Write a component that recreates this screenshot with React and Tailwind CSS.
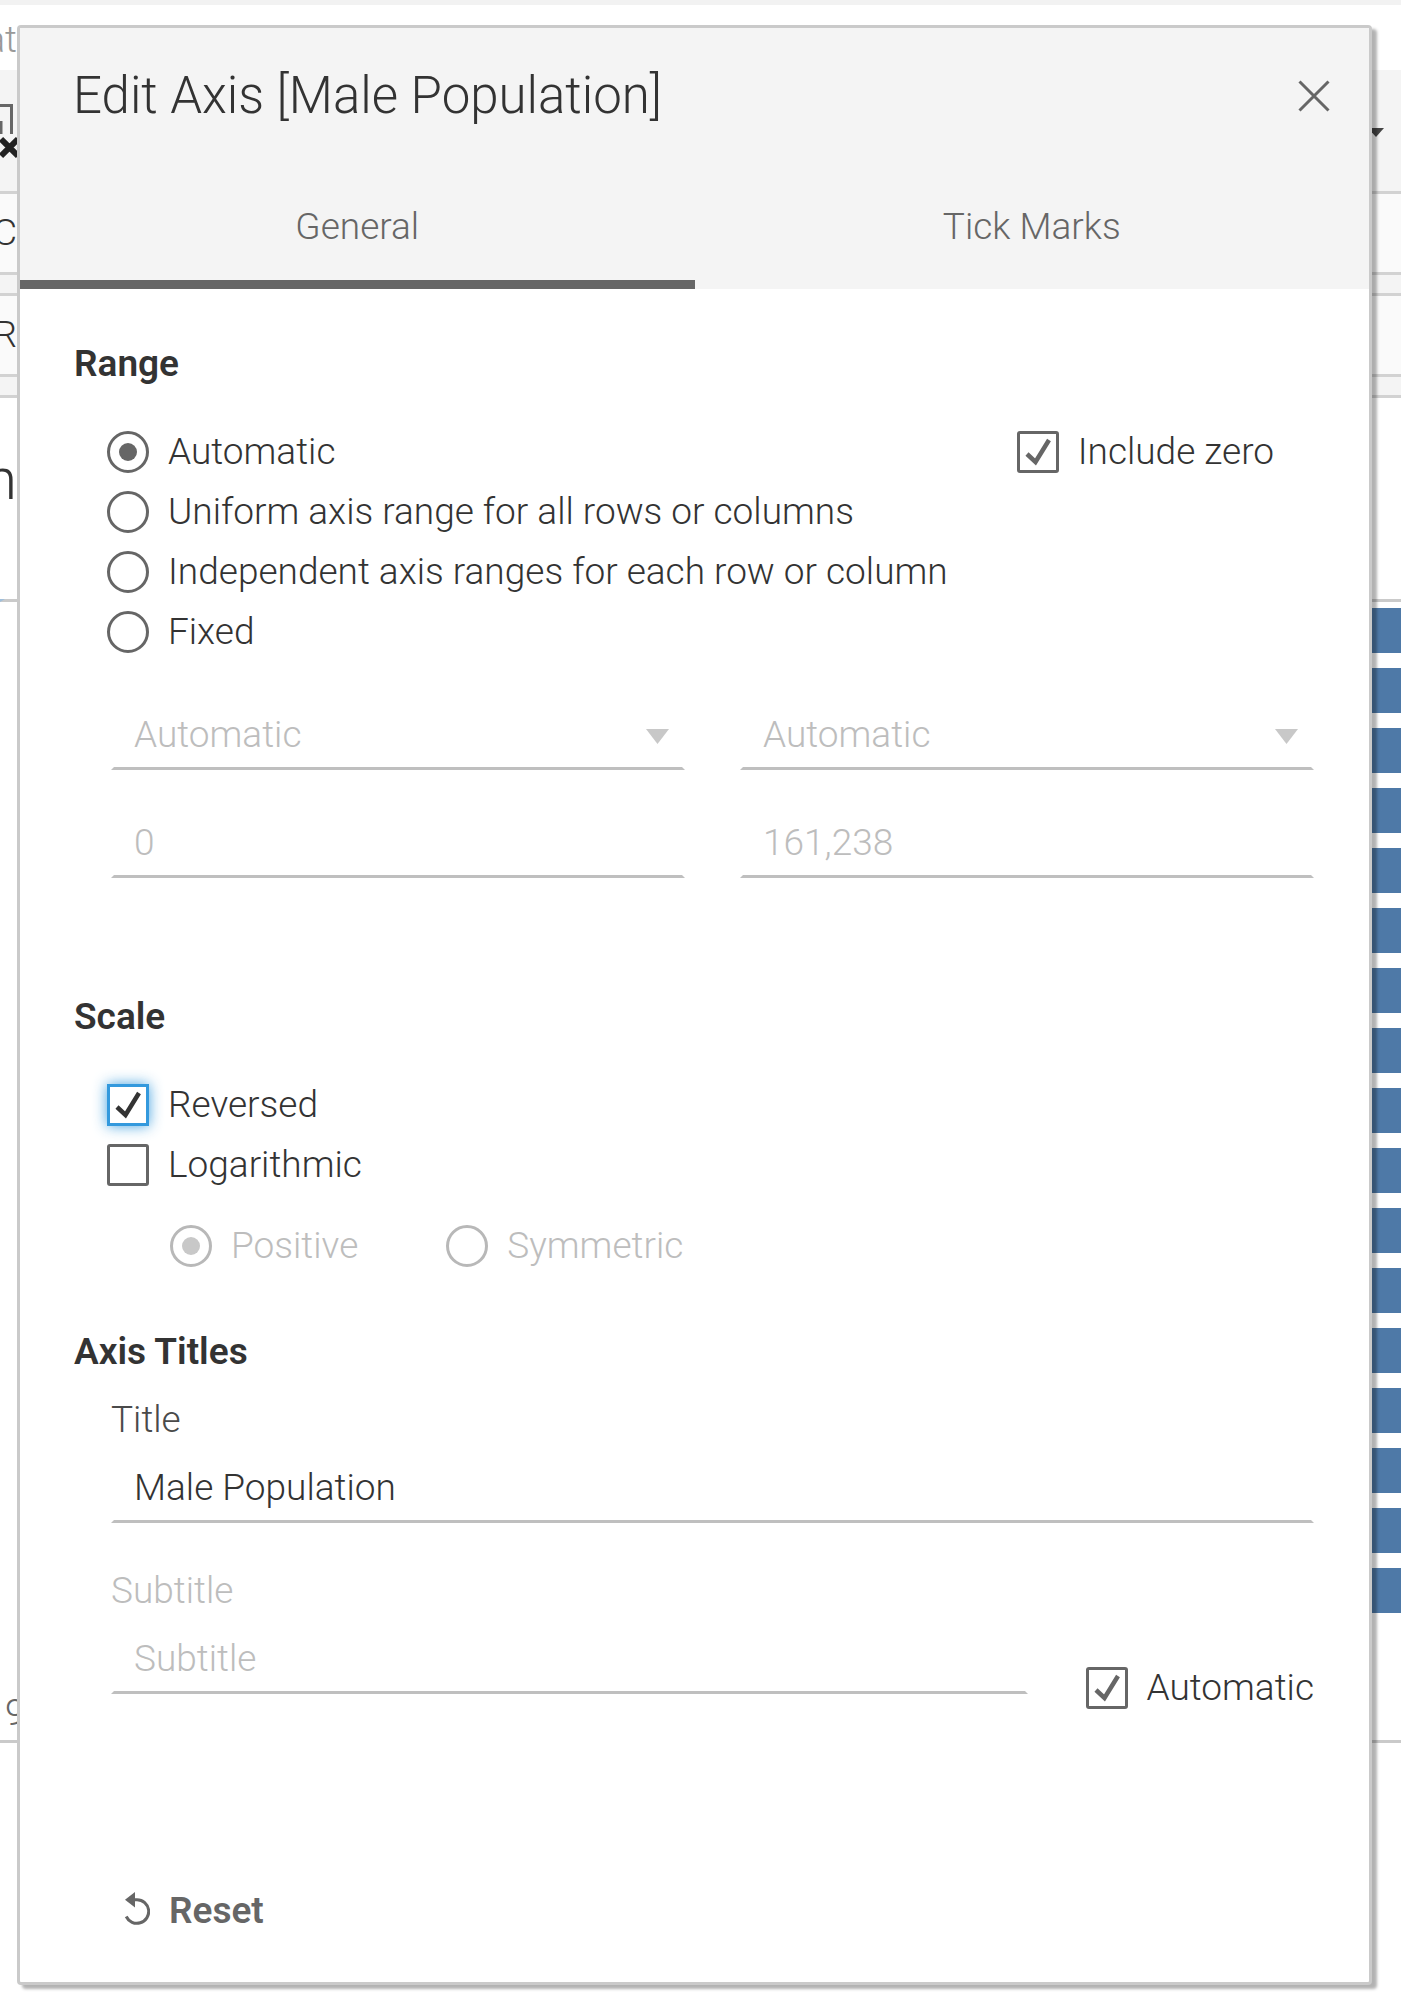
import React, { useState } from 'react';

const BARS = Array.from({ length: 17 }, (_, i) => i);

function Option({ type, label, focused = false, disabled = false, ...props }) {
  const radio = type === 'radio';
  const text = disabled ? 'text-[#bdbdbd]' : 'text-[#333]';
  const shape = radio ? 'rounded-full' : focused ? '' : 'rounded-[3px]';
  const edge = focused
    ? 'border-[#3399dd] shadow-[0_0_14px_rgba(51,153,221,0.9)]'
    : disabled
      ? 'border-[#b8b8b8]'
      : 'border-[#666]';
  return (
    <label className={`flex h-[60px] items-center gap-[19px] whitespace-nowrap ${text}`}>
      <span className="grid size-[42px] shrink-0 place-items-center">
        <input
          type={type}
          disabled={disabled}
          className={`peer col-start-1 row-start-1 size-[42px] appearance-none border-[3px] bg-white outline-none ${shape} ${edge}`}
          {...props}
        />
        {radio ? (
          <span
            className={`pointer-events-none col-start-1 row-start-1 hidden size-[18px] rounded-full peer-checked:block ${disabled ? 'bg-[#c8c8c8]' : 'bg-[#666]'}`}
          />
        ) : (
          <svg
            viewBox="0 0 42 42"
            className={`pointer-events-none col-start-1 row-start-1 hidden size-[42px] peer-checked:block ${focused ? 'text-[#333]' : 'text-[#666]'}`}
            fill="none"
            stroke="currentColor"
            strokeWidth="4.500"
            aria-hidden="true"
          >
            <path d="M10 23 L18.500 31 L32 9" />
          </svg>
        )}
      </span>
      <span>{label}</span>
    </label>
  );
}

const field =
  'h-16 w-full appearance-none border-x-[3px] border-b-[3px] border-x-transparent border-b-[#bfbfbf] bg-transparent pl-5 pb-1 outline-none';

function SelectField({ label }) {
  return (
    <div className="grid items-center">
      <select aria-label={label} disabled className={`${field} col-start-1 row-start-1 text-[#bdbdbd] opacity-100`}>
        <option>Automatic</option>
      </select>
      <svg
        viewBox="0 0 23 15"
        className="pointer-events-none col-start-1 row-start-1 mr-4 mb-1 h-[15px] w-[23px] justify-self-end"
        aria-hidden="true"
      >
        <path d="M0 0H23L11.500 15Z" fill="#c8c8c8" />
      </svg>
    </div>
  );
}

function Stub({ children, className = 'justify-end' }) {
  return <span className={`flex w-[17px] shrink-0 items-center overflow-hidden ${className}`}>{children}</span>;
}

function Workbook() {
  return (
    <div className="col-start-1 row-start-1 min-w-0 overflow-hidden bg-white text-[#333]">
      <div className="h-[5px] bg-[#f2f2f2]" />
      <div className="flex h-[65px] items-center pt-1 text-[#999]">
        <Stub>at</Stub>
      </div>
      <div className="flex h-[124px] justify-between border-b-[3px] border-[#d2d2d2] bg-[#f4f4f4]">
        <svg viewBox="0 0 17 121" className="h-[121px] w-[17px]" fill="none" aria-hidden="true">
          <path d="M0 35.500H11.500V64M1 51V64" stroke="#666" strokeWidth="3" />
          <path d="M1 69L18 86M18 69L1 86" stroke="#222" strokeWidth="6" />
        </svg>
        <svg viewBox="0 0 29 121" className="h-[121px] w-[29px]" aria-hidden="true">
          <path d="M-4 58H12L4 67Z" fill="#444" />
        </svg>
      </div>
      <div className="flex h-[81px] border-b-[3px] border-[#d2d2d2] bg-[#fafafa]">
        <Stub>C</Stub>
      </div>
      <div className="h-[21px] border-b-[3px] border-[#d2d2d2] bg-[#f4f4f4]" />
      <div className="flex h-[81px] border-b-[3px] border-[#d2d2d2] bg-[#fafafa]">
        <Stub>R</Stub>
      </div>
      <div className="h-[21px] border-b-[3px] border-[#d2d2d2] bg-[#f4f4f4]" />
      <div className="flex h-[201px]">
        <Stub className="justify-end pb-10 text-[58px]">n</Stub>
      </div>
      <div className="flex h-[3px] bg-[#cacaca]">
        <svg viewBox="0 0 5 3" className="h-[3px] w-[5px]" aria-hidden="true">
          <path d="M0 0H5L0 3Z" fill="#a0bfda" />
        </svg>
      </div>
      <div className="flex h-[1141px] flex-col border-b-[3px] border-[#cacaca] pt-[6px]">
        <div className="flex flex-col gap-[15px]">
          {BARS.map((i) => (
            <div key={i} className="h-[45px] bg-linear-to-l from-[#4e79a7] from-50% to-transparent to-50%" />
          ))}
        </div>
        <div className="mt-auto flex h-[54px] text-[#666]">
          <Stub className="justify-start pl-[5px]">9</Stub>
        </div>
      </div>
    </div>
  );
}

export default function App() {
  const [range, setRange] = useState('Automatic');
  const [title, setTitle] = useState('Male Population');
  const ranges = [
    'Automatic',
    'Uniform axis range for all rows or columns',
    'Independent axis ranges for each row or column',
    'Fixed',
  ];
  return (
    <div className="grid min-h-screen grid-cols-1 overflow-hidden bg-white font-[Roboto,sans-serif] text-[37px] leading-[44px] font-light">
      <Workbook />
      <div
        role="dialog"
        aria-labelledby="dialog-title"
        className="z-10 col-start-1 row-start-1 mt-[25px] mr-[29px] mb-7 ml-[17px] self-start rounded-[4px] border-[3px] border-[#cacaca] bg-white text-[#333] shadow-[5px_4px_3px_rgba(0,0,0,0.3)]"
      >
        <header className="bg-[#f4f4f4]">
          <div className="flex items-center justify-between pt-[38px] pr-[38px] pl-[53px]">
            <h1 id="dialog-title" className="text-[51px] leading-[60px]">
              Edit Axis [Male Population]
            </h1>
            <button type="button" aria-label="Close" className="text-[#666]">
              <svg viewBox="0 0 34 34" className="size-[34px]" fill="none" stroke="currentColor" strokeWidth="3" aria-hidden="true">
                <path d="M2.500 2.500L31.500 31.500M31.500 2.500L2.500 31.500" />
              </svg>
            </button>
          </div>
          <div role="tablist" className="mt-[37px] grid grid-cols-2 text-[#666]">
            <button type="button" role="tab" aria-selected="true" className="h-[126px] border-b-[9px] border-[#666] pt-[11px]">
              General
            </button>
            <button type="button" role="tab" aria-selected="false" className="h-[126px] border-b-[9px] border-transparent pt-[11px]">
              Tick Marks
            </button>
          </div>
        </header>

        <div className="pt-[53px] pr-[55px] pb-[49px] pl-[54px]">
          <h2 className="font-semibold">Range</h2>
          <div className="mt-9 flex items-start justify-between pr-10 pl-[33px]">
            <div>
              {ranges.map((r) => (
                <Option key={r} type="radio" name="range" label={r} checked={range === r} onChange={() => setRange(r)} />
              ))}
            </div>
            <Option type="checkbox" label="Include zero" defaultChecked />
          </div>
          <div className="mt-11 grid grid-cols-2 gap-x-[55px] gap-y-11 pl-[37px]">
            <SelectField label="Range start" />
            <SelectField label="Range end" />
            <input aria-label="Start value" disabled defaultValue="0" className={`${field} text-[#bdbdbd]`} />
            <input aria-label="End value" disabled defaultValue="161,238" className={`${field} text-[#bdbdbd]`} />
          </div>

          <h2 className="mt-[117px] font-semibold">Scale</h2>
          <div className="mt-9 pl-[33px]">
            <Option type="checkbox" label="Reversed" focused defaultChecked />
            <Option type="checkbox" label="Logarithmic" />
            <div className="mt-[21px] flex gap-[88px] pl-[63px]">
              <Option type="radio" name="log" label="Positive" disabled defaultChecked />
              <Option type="radio" name="log" label="Symmetric" disabled />
            </div>
          </div>

          <h2 className="mt-[54px] font-semibold">Axis Titles</h2>
          <div className="mt-6 pl-[37px]">
            <label htmlFor="axis-title" className="block text-[#4a4a4a]">
              Title
            </label>
            <input
              id="axis-title"
              value={title}
              onChange={(e) => setTitle(e.target.value)}
              className={`${field} mt-[17px]`}
            />
            <div className="mt-[46px] flex items-end gap-[58px]">
              <div className="min-w-0 flex-1 pb-6">
                <label htmlFor="axis-subtitle" className="block text-[#bdbdbd]">
                  Subtitle
                </label>
                <input
                  id="axis-subtitle"
                  disabled
                  placeholder="Subtitle"
                  className={`${field} mt-[17px] placeholder:text-[#bdbdbd] placeholder:opacity-100`}
                />
              </div>
              <Option type="checkbox" label="Automatic" defaultChecked />
            </div>
          </div>

          <button type="button" className="mt-[171px] ml-[50px] flex items-center gap-[19px] font-semibold text-[#666]">
            <svg viewBox="0 0 26 38" className="h-[38px] w-[26px]" fill="none" aria-hidden="true">
              <path d="M9 7.700H13A11.800 11.800 0 1 1 2.200 24.500" stroke="#666" strokeWidth="3" />
              <path d="M1 7.700L11 0V15.400Z" fill="#666" />
            </svg>
            Reset
          </button>
        </div>
      </div>
    </div>
  );
}
